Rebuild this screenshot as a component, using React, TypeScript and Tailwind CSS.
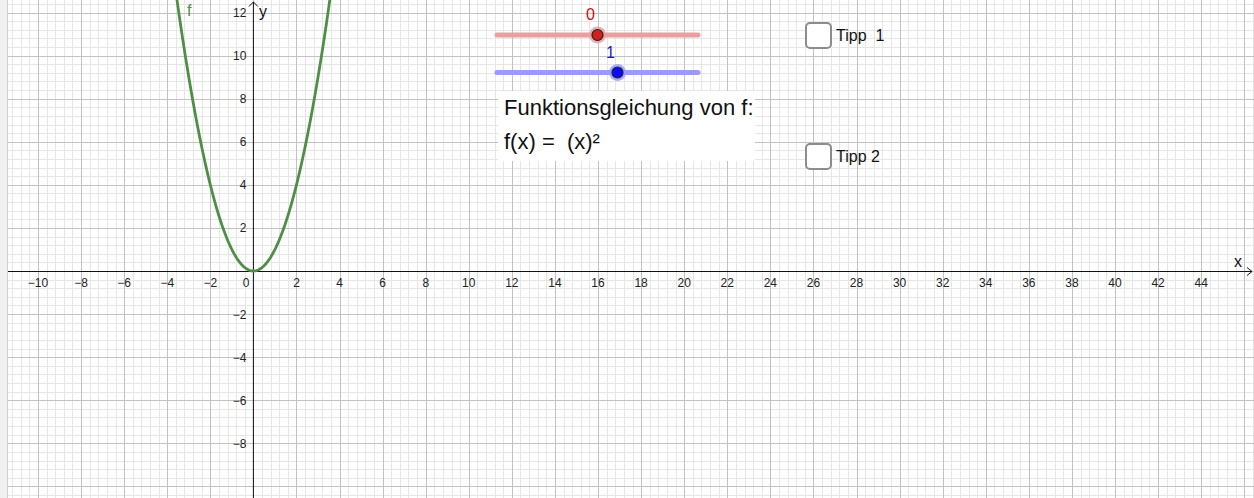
import type { ReactNode } from 'react'

// Graph geometry, all in page pixels
const OX = 253.4
const OY = 271
const S = 21.54
const LEFT = 8
const W = 1254
const H = 498

const FONT = '"Liberation Sans", Arial, sans-serif'

function px(x: number) { return OX + x * S }
function py(y: number) { return OY - y * S }
function crisp(v: number) { return Math.round(v) + 0.5 }

function Grid() {
  const minor: ReactNode[] = []
  const major: ReactNode[] = []
  const step = S * 0.4
  for (let k = Math.ceil((LEFT - OX) / step); OX + k * step <= W; k++) {
    const x = crisp(OX + k * step)
    const isMajor = k % 5 === 0
    ;(isMajor ? major : minor).push(
      <line key={'v' + k} x1={x} x2={x} y1={0} y2={H} stroke={isMajor ? '#c2c2c2' : '#e6e6e6'} strokeWidth={1} />
    )
  }
  for (let k = Math.ceil((OY - H) / step); OY - k * step >= 0; k++) {
    const y = crisp(OY - k * step)
    const isMajor = k % 5 === 0
    ;(isMajor ? major : minor).push(
      <line key={'h' + k} x1={LEFT} x2={W} y1={y} y2={y} stroke={isMajor ? '#c2c2c2' : '#e6e6e6'} strokeWidth={1} />
    )
  }
  // minor first so the major lines sit on top
  return (
    <g>
      {minor}
      {major}
    </g>
  )
}

function num(n: number) {
  return n < 0 ? '\u2212' + Math.abs(n) : String(n)
}

function AxisLabels() {
  const xs: number[] = []
  for (let n = -10; n <= 44; n += 2) if (n !== 0) xs.push(n)
  const ys = [12, 10, 8, 6, 4, 2, -2, -4, -6, -8]
  return (
    <g fontFamily={FONT} fontSize={12} fill="#222">
      {xs.map((n) => (
        <text key={'x' + n} x={px(n)} y={OY + 16} textAnchor="middle">{num(n)}</text>
      ))}
      <text x={OX - 4} y={OY + 16} textAnchor="end">0</text>
      {ys.map((n) => (
        <text key={'y' + n} x={OX - 7} y={py(n) + 4.5} textAnchor="end">{num(n)}</text>
      ))}
    </g>
  )
}

function Parabola() {
  const pts: string[] = []
  for (let x = -3.62; x <= 3.62; x += 0.04) {
    pts.push(`${px(x).toFixed(2)},${py(x * x).toFixed(2)}`)
  }
  return <polyline points={pts.join(' ')} fill="none" stroke="#4f8f45" strokeWidth={2.8} strokeLinejoin="round" />
}

function Slider({ y, knob, track, fill }: { y: number; knob: number; track: string; fill: string }) {
  return (
    <g>
      <line x1={497} x2={698} y1={y} y2={y} stroke={track} strokeWidth={5} strokeLinecap="round" />
      <circle cx={knob} cy={y} r={8.5} fill={track} opacity={0.85} />
      <circle cx={knob} cy={y} r={5.5} fill={fill} stroke="#222" strokeWidth={1.2} />
    </g>
  )
}

function Checkbox({ top, label }: { top: string; label: string }) {
  return (
    <div className={`absolute left-[805px] ${top} flex items-center gap-[4px]`}>
      <div className="w-[27px] h-[27px] rounded-[5px] border-2 border-[#8c8c8c] bg-white" />
      <span className="text-[16px] text-[#111] whitespace-pre" style={{ fontFamily: FONT }}>{label}</span>
    </div>
  )
}

export default function App() {
  return (
    <div className="relative w-[1254px] h-[498px] flex bg-white overflow-hidden">
      <div className="w-[8px] h-full bg-[#f1f1f1] border-r border-[#d0d0d0] shrink-0" />
      <svg width={W - LEFT} height={H} viewBox={`${LEFT} 0 ${W - LEFT} ${H}`} className="block shrink-0">
        <Grid />
        {/* axes */}
        <line x1={LEFT} x2={1252} y1={OY + 0.5} y2={OY + 0.5} stroke="#111" strokeWidth={1} />
        <line x1={OX} x2={OX} y1={2} y2={H} stroke="#111" strokeWidth={1} />
        <polyline points={`1247,${OY - 3.5} 1252,${OY + 0.5} 1247,${OY + 4.5}`} fill="none" stroke="#111" strokeWidth={1} />
        <polyline points={`${OX - 4.5},6.5 ${OX},2 ${OX + 4.5},6.5`} fill="none" stroke="#111" strokeWidth={1} />
        <text x={1234} y={267} fontFamily={FONT} fontSize={16} fill="#111">x</text>
        <text x={259} y={17} fontFamily={FONT} fontSize={16} fill="#111">y</text>
        <AxisLabels />
        <Parabola />
        <text x={187} y={16} fontFamily={FONT} fontSize={16} fill="#4f8f45">f</text>
        {/* sliders */}
        <Slider y={35} knob={597.5} track="#e8a0a0" fill="#d21f1f" />
        <text x={586} y={20} fontFamily={FONT} fontSize={16} fill="#cc1010">0</text>
        <Slider y={72.5} knob={617.5} track="#9b9bff" fill="#0a0aff" />
        <text x={606} y={57.5} fontFamily={FONT} fontSize={16} fill="#1414e6">1</text>
      </svg>

      {/* text box */}
      <div
        className="absolute left-[498px] top-[91px] w-[257px] h-[70px] bg-white pl-[6px] text-[22px] text-[#111] leading-[34px]"
        style={{ fontFamily: FONT }}
      >
        <div className="whitespace-nowrap">Funktionsgleichung von f:</div>
        <div className="whitespace-pre">f(x) =  (x)²</div>
      </div>

      <Checkbox top="top-[22px]" label="Tipp  1" />
      <Checkbox top="top-[143px]" label="Tipp 2" />
    </div>
  )
}
